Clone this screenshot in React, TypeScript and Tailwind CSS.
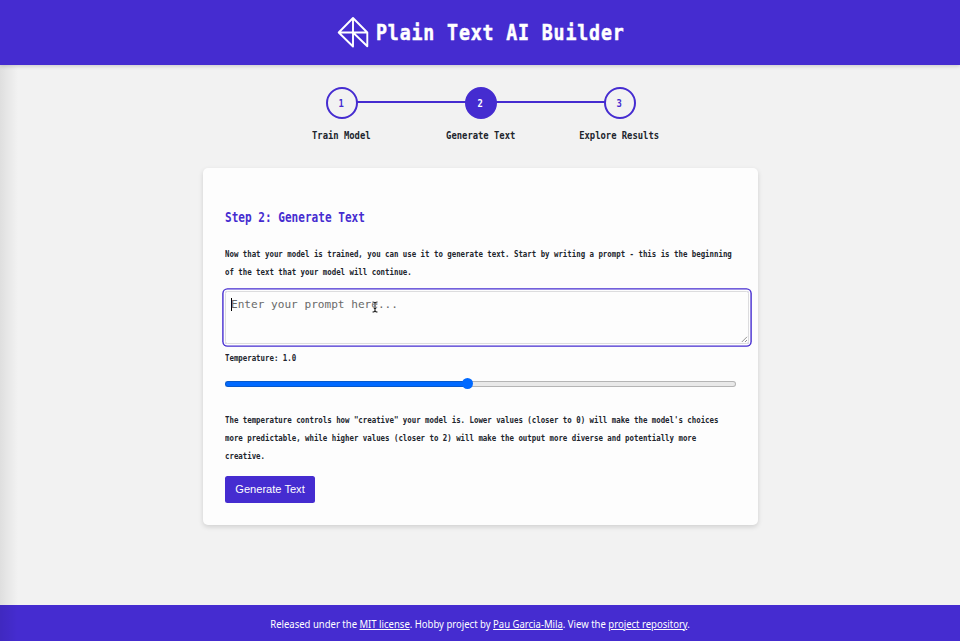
import React from "react";

const pixel = "font-['DejaVu_Sans_Mono','Liberation_Mono',monospace] font-bold whitespace-nowrap";

function Line({ children }: { children: React.ReactNode }) {
  return (
    <span className={`${pixel} block w-max origin-left scale-x-[0.832] text-[8.9px] leading-[17.75px]`}>
      {children}
    </span>
  );
}

function Step({ n, label, active = false }: { n: number; label: string; active?: boolean }) {
  return (
    <li className="flex w-[139px] flex-col items-center">
      <div
        className={`z-10 flex h-8 w-8 items-center justify-center rounded-full border-2 border-[#452cd0] ${
          active ? "bg-[#452cd0] text-white" : "bg-[#f2f2f2] text-[#452cd0]"
        }`}
      >
        <span className={`${pixel} mt-px scale-x-[0.83] text-[10.67px] leading-4`}>{n}</span>
      </div>
      <span className={`${pixel} mt-2 scale-x-[0.83] text-[10.67px] leading-[18px] text-[#20242c]`}>{label}</span>
    </li>
  );
}

export default function App() {
  return (
    <div className="relative flex h-[641px] w-[960px] flex-col overflow-hidden bg-[#f2f2f2] text-[#20242c]">
      <header className="z-10 flex h-[64.5px] shrink-0 items-center bg-[#452cd0] pl-[337px] text-white shadow-[0_1px_4px_rgba(0,0,0,0.18)]">
        <svg className="mt-[-1px] h-8 w-8 shrink-0" viewBox="0 0 32 32" fill="none" stroke="white" strokeWidth="1.9" strokeLinejoin="round">
          <path d="M16 2 L1.7 16.5 L16 30.5 V2 L30.3 16.5 V30.3 L16 16.5 M1.7 16.5 H30.3" />
        </svg>
        <h1 className={`${pixel} mt-[2px] ml-[7px] origin-left scale-x-[0.83] text-[22px] leading-8 tracking-[1.02px] [-webkit-text-stroke:0.5px_white]`}>
          Plain Text AI Builder
        </h1>
      </header>

      <main className="flex grow flex-col items-center">
        <div className="relative mt-[22.5px] ml-px">
          <div className="absolute top-[14px] left-[70px] h-[2px] w-[278px] bg-[#452cd0]" />
          <ol className="relative flex">
            <Step n={1} label="Train Model" />
            <Step n={2} label="Generate Text" active />
            <Step n={3} label="Explore Results" />
          </ol>
        </div>

        <section className="mt-[23px] ml-px flex h-[356.5px] w-[555px] flex-col items-start rounded-[5px] bg-[#fdfdfd] pl-[22px] shadow-[0_2px_5px_rgba(0,0,0,0.14)]">
          <h2 className={`${pixel} mt-10 origin-left scale-x-[0.83] text-[13.33px] leading-5 text-[#452cd0]`}>
            Step 2: Generate Text
          </h2>
          <p className="mt-[18px]">
            <Line>Now that your model is trained, you can use it to generate text. Start by writing a prompt - this is the beginning</Line>
            <Line>of the text that your model will continue.</Line>
          </p>
          <div className="relative mt-[9.5px] flex h-[53px] w-[524px] items-start rounded-[2.5px] border border-[#dcdcde] pt-[6px] pl-[5px] ring-[1.4px] ring-[#452cd0] ring-offset-[1.4px] ring-offset-[#fdfdfd]">
            <span className="h-[13px] w-px bg-black" />
            <span className="-ml-px whitespace-nowrap font-['DejaVu_Sans_Mono',monospace] text-[11.1px] leading-[13px] text-[#696969]">
              Enter your prompt here...
            </span>
            <svg className="absolute top-[9px] left-[145px] h-[12px] w-[8px]" viewBox="0 0 8 12" fill="none">
              <path d="M1.5 1 Q4 1 4 2.5 Q4 1 6.5 1 M4 2.5 V9.5 M1.5 11 Q4 11 4 9.5 Q4 11 6.5 11 M2.8 7.5 H5.2" stroke="white" strokeWidth="2" />
              <path d="M1.5 1 Q4 1 4 2.5 Q4 1 6.5 1 M4 2.5 V9.5 M1.5 11 Q4 11 4 9.5 Q4 11 6.5 11 M2.8 7.5 H5.2" stroke="#222" strokeWidth="1.1" />
            </svg>
            <svg className="absolute right-0 bottom-0 h-[7px] w-[7px]" viewBox="0 0 7 7" stroke="#777" strokeWidth="0.8">
              <path d="M0.8 6 L6 0.8 M4 6 L6 4" />
            </svg>
          </div>
          <div className="mt-[6px]">
            <Line>Temperature: 1.0</Line>
          </div>
          <div className="mt-[10.5px] flex h-[11px] w-[511px] items-center">
            <div className="h-[6px] w-[240px] rounded-l-full border border-r-0 border-[#0759cc] bg-[#0069ff]" />
            <div className="z-10 -mx-[3px] h-[11px] w-[11px] rounded-full bg-[#0069ff]" />
            <div className="h-[6px] grow rounded-r-full border border-l-0 border-[#b5b5b5] bg-[#e9e9e9]" />
          </div>
          <p className="mt-[23px]">
            <Line>The temperature controls how "creative" your model is. Lower values (closer to 0) will make the model's choices</Line>
            <Line>more predictable, while higher values (closer to 2) will make the output more diverse and potentially more</Line>
            <Line>creative.</Line>
          </p>
          <button className="mt-[10.5px] h-[26.5px] w-[90px] rounded-[2.5px] bg-[#452cd0] font-['Liberation_Sans',sans-serif] text-[11.1px] leading-[26px] whitespace-nowrap text-white">
            Generate Text
          </button>
        </section>
      </main>

      <footer className="flex h-[36.5px] shrink-0 items-center justify-center bg-[#452cd0] pt-[3px] pl-px font-['Noto_Sans',sans-serif] text-[10.3px] whitespace-nowrap text-white">
        <p className="scale-x-[0.924]">
          Released under the <a className="underline">MIT license</a>. Hobby project by{" "}
          <a className="underline">Pau Garcia-Mila</a>. View the <a className="underline">project repository</a>.
        </p>
      </footer>
      <div className="pointer-events-none absolute inset-y-0 left-0 w-[18px] bg-linear-to-r from-black/8 to-transparent" />
    </div>
  );
}
